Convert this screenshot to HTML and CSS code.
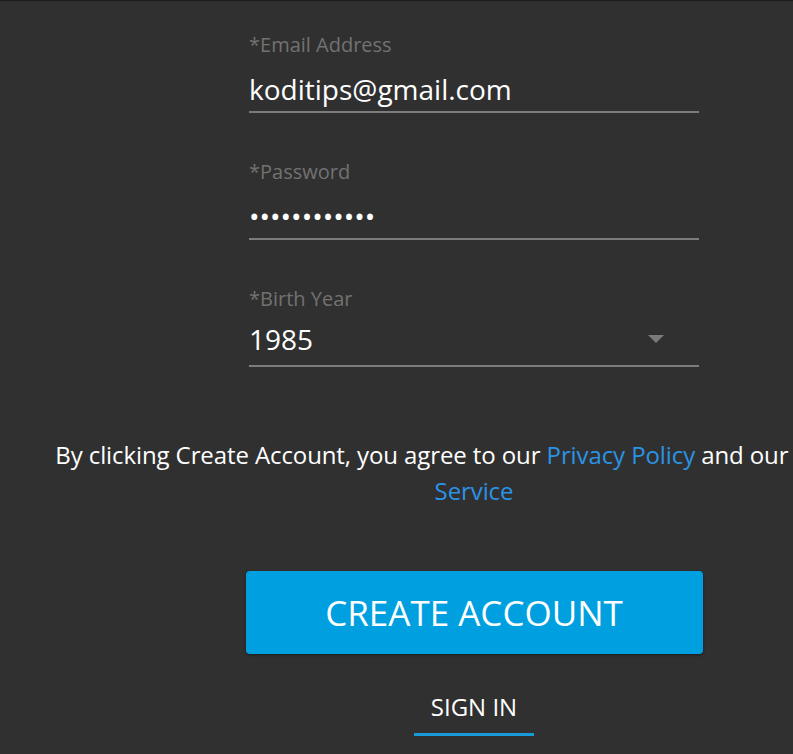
FILE: index.html
```html
<!DOCTYPE html>
<html lang="en">
<head>
<meta charset="utf-8">
<title>Create Account</title>
<link rel="stylesheet" href="styles.css">
</head>
<body>
<main class="page">
  <form class="form">
    <div class="field">
      <label class="field-label">*Email Address</label>
      <div class="field-value">koditips@gmail.com</div>
    </div>
    <div class="field">
      <label class="field-label">*Password</label>
      <div class="field-value">••••••••••••</div>
    </div>
    <div class="field">
      <label class="field-label">*Birth Year</label>
      <div class="field-value select">
        <span class="year">1985</span>
        <svg class="caret" width="16" height="8" viewBox="0 0 16 8"><path d="M0 0 L16 0 L8 8 Z" fill="#7a7a7a"/></svg>
      </div>
    </div>
  </form>
  <p class="terms">By clicking Create Account, you agree to our <a href="#">Privacy Policy</a> and our <a href="#">Terms of<br>Service</a></p>
  <button class="create" type="button">CREATE ACCOUNT</button>
  <a class="signin" href="#">SIGN IN</a>
</main>
</body>
</html>
```

FILE: styles.css
```css
html, body {
  margin: 0;
  padding: 0;
  background: #303030;
  overflow: hidden;
}
body {
  border-top: 1px solid #1c1c1c;
  height: 753px;
  font-family: "Open Sans", "Noto Sans", sans-serif;
}
.page {
  width: 948px;
  display: flex;
  flex-direction: column;
  align-items: center;
  padding-top: 30px;
}
.form {
  width: 450px;
  display: flex;
  flex-direction: column;
  gap: 45px;
}
.field {
  display: flex;
  flex-direction: column;
  border-bottom: 2px solid #7c7c7c;
}
.field-label {
  font-size: 20px;
  line-height: 28px;
  color: #727272;
  margin-bottom: 8px;
}
.field-value {
  font-size: 28px;
  line-height: 44px;
  height: 44px;
  color: #ffffff;
}
.select {
  display: flex;
  align-items: flex-start;
  justify-content: space-between;
  padding-right: 35px;
}
.year {
  line-height: 36px;
}
.caret {
  margin-top: 14px;
}
.terms {
  margin: 70px 0 0;
  text-align: center;
  font-size: 24px;
  line-height: 36px;
  color: #ffffff;
  white-space: nowrap;
  letter-spacing: -0.1px;
}
.terms a {
  color: #2b93e6;
  text-decoration: none;
}
.create {
  margin-top: 62px;
  width: 457px;
  height: 83px;
  border: none;
  border-radius: 4px;
  background: #00a0e0;
  color: #ffffff;
  font-family: "Open Sans", "Noto Sans", sans-serif;
  font-size: 35px;
  box-shadow: 0 1px 3px rgba(0,0,0,0.4);
  padding: 0;
}
.signin {
  margin-top: 38px;
  font-size: 24px;
  line-height: 30px;
  color: #ffffff;
  text-decoration: none;
  padding: 0 17px 11px;
  border-bottom: 3px solid #1a9ad8;
}
```
